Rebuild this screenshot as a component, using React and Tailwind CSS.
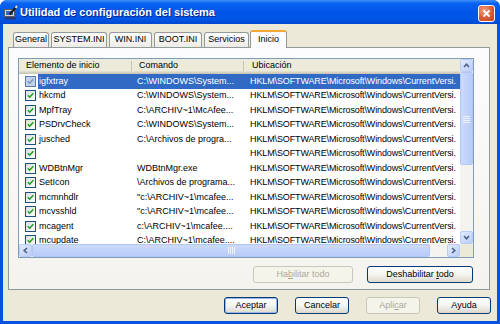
import React from "react";

const rows = [
  ["igfxtray", "C:\\WINDOWS\\System..."],
  ["hkcmd", "C:\\WINDOWS\\System..."],
  ["MpfTray", "C:\\ARCHIV~1\\McAfee..."],
  ["PSDrvCheck", "C:\\WINDOWS\\System..."],
  ["jusched", "C:\\Archivos de progra..."],
  ["", ""],
  ["WDBtnMgr", "WDBtnMgr.exe"],
  ["SetIcon", "\\Archivos de programa..."],
  ["mcmnhdlr", "\"c:\\ARCHIV~1\\mcafee..."],
  ["mcvsshld", "\"c:\\ARCHIV~1\\mcafee..."],
  ["mcagent", "c:\\ARCHIV~1\\mcafee...."],
  ["mcupdate", "C:\\ARCHIV~1\\mcafee...."],
];
const LOC = "HKLM\\SOFTWARE\\Microsoft\\Windows\\CurrentVersi.";

function Check({ sel }) {
  return (
    <span
      className={
        sel
          ? "flex h-[11px] w-[11px] items-center justify-center border border-[#5D7AB0] bg-[#C3D1EC]"
          : "flex h-[11px] w-[11px] items-center justify-center border border-[#1C5180] bg-gradient-to-br from-[#DCDCD7] to-white"
      }
    >
      <svg width="7" height="7" viewBox="0 0 7 7">
        <path
          d="M0.8 3.3 L2.7 5.2 L6.3 1.2"
          stroke={sel ? "#7896C6" : "#21A121"}
          strokeWidth="1.6"
          fill="none"
        />
      </svg>
    </span>
  );
}

function ArrowBtn({ dir }) {
  const paths = {
    up: "M2 6 L4.5 3.2 L7 6",
    down: "M2 3 L4.5 5.8 L7 3",
    left: "M6 2 L3.2 4.5 L6 7",
    right: "M3 2 L5.8 4.5 L3 7",
  };
  return (
    <div className="flex h-[13px] w-[13px] shrink-0 items-center justify-center rounded-[2px] border border-[#B7CCF7] bg-gradient-to-br from-[#E3EBFE] to-[#B9CDF8]">
      <svg width="9" height="9" viewBox="0 0 9 9">
        <path d={paths[dir]} stroke="#4D6185" strokeWidth="1.6" fill="none" />
      </svg>
    </div>
  );
}

function Btn({ children, w, disabled, def }) {
  let cls =
    "flex h-[17px] items-center justify-center rounded-[3px] border text-[9px] leading-none ";
  if (disabled) {
    cls += "border-[#C9C7BA] bg-[#F5F4EA] text-[#ACA899] ";
  } else {
    cls +=
      "border-[#003C74] bg-gradient-to-b from-white via-[#F4F4F0] to-[#DCD8CC] text-black ";
  }
  if (def) cls += "shadow-[inset_0_0_0_1px_#9DB2EF] ";
  return <div className={cls + w}>{children}</div>;
}

function Tab({ label, w, sel }) {
  if (sel) {
    return (
      <div
        className={
          "relative z-10 -mb-px -ml-px flex h-[18px] items-center justify-center rounded-t-[3px] border border-b-0 border-[#919B9C] border-t-2 border-t-[#F5A83A] bg-[#FCFCFE] pb-[1px] text-[9px] text-black " +
          w
        }
      >
        {label}
      </div>
    );
  }
  return (
    <div
      className={
        "flex h-[15px] items-center justify-center rounded-t-[3px] border border-b-0 border-[#919B9C] bg-gradient-to-b from-white to-[#ECEBE6] text-[9px] text-black " +
        w
      }
    >
      {label}
    </div>
  );
}

export default function App() {
  return (
    <div className="flex h-[324px] w-[500px] flex-col overflow-hidden rounded-t-[7px] bg-[#0653E3] font-['Liberation_Sans',Arial,sans-serif]">
      {/* Title bar */}
      <div className="flex h-[24px] shrink-0 items-center bg-[linear-gradient(to_bottom,#3D8FF7_0%,#0A62F2_14%,#0058E8_45%,#0055E5_80%,#0047D0_100%)] pl-[4px] pr-[5px]">
        <svg width="14" height="15" viewBox="0 0 14 15" className="shrink-0">
          <rect x="0.5" y="4.5" width="10" height="7" fill="#D8D8D0" stroke="#5A5A66" />
          <rect x="2" y="6" width="7" height="4" fill="#3465C8" />
          <rect x="1" y="12" width="11" height="2.5" fill="#2A3A78" />
          <path d="M13 1 L5.5 9.5" stroke="#1A1A1A" strokeWidth="2" />
          <path d="M13 1 L11.5 2.8" stroke="#E8E8E8" strokeWidth="2" />
        </svg>
        <div className="ml-[2px] flex-1 text-[11px] font-bold leading-none text-white [text-shadow:1px_1px_0_#0A1F8C]">
          Utilidad de configuración del sistema
        </div>
        <div className="mt-[3px] flex h-[17px] w-[17px] items-center justify-center rounded-[3px] border border-white bg-[radial-gradient(circle_at_35%_30%,#F2A084,#DA5A33_55%,#C1401C)]">
          <svg width="9" height="9" viewBox="0 0 9 9">
            <path d="M1.5 1.5 L7.5 7.5 M7.5 1.5 L1.5 7.5" stroke="white" strokeWidth="1.8" />
          </svg>
        </div>
      </div>

      {/* Body */}
      <div className="mx-[3px] mb-[3px] flex flex-1 flex-col bg-[#ECE9D8] pt-[6px]">
        {/* Tabs */}
        <div className="ml-[10px] flex h-[17px] items-end gap-[2px]">
          <Tab label="General" w="w-[36px]" />
          <Tab label="SYSTEM.INI" w="w-[56px]" />
          <Tab label="WIN.INI" w="w-[43px]" />
          <Tab label="BOOT.INI" w="w-[48px]" />
          <Tab label="Servicios" w="w-[45px]" />
          <Tab label="Inicio" w="w-[37px]" sel />
        </div>

        {/* Panel */}
        <div className="ml-[5px] flex h-[243px] w-[482px] flex-col border border-[#919B9C] bg-gradient-to-b from-[#FCFCFE] to-[#F4F3EE] pl-[9px] pr-[15px] pt-[10px]">
          {/* List view */}
          <div className="flex h-[200px] w-[456px] flex-col border border-[#7F9DB9] bg-white">
            <div className="flex h-[185px]">
              <div className="flex w-[441px] flex-col overflow-hidden">
                {/* header */}
                <div className="flex h-[15px] shrink-0 items-center bg-[#EBEADB] pb-[2px] text-[9px] text-black shadow-[inset_0_-1px_0_#CBC7B8,inset_0_-2px_0_#D6D2C2,inset_0_-3px_0_#E2DECD]">
                  <div className="w-[112px] pl-[7px]">Elemento de inicio</div>
                  <div className="h-[10px] w-px bg-[#C7C5B2]" />
                  <div className="w-[111px] pl-[7px]">Comando</div>
                  <div className="h-[10px] w-px bg-[#C7C5B2]" />
                  <div className="flex-1 pl-[8px]">Ubicación</div>
                </div>
                {/* rows */}
                {rows.map(([name, cmd], i) => {
                  const sel = i === 0;
                  return (
                    <div key={i} className="flex h-[14.5px] shrink-0 items-center text-[9px] leading-none">
                      <div className="flex w-[19px] shrink-0 pl-[6px]">
                        <Check sel={sel} />
                      </div>
                      <div
                        className={
                          sel
                            ? "flex h-full flex-1 items-center bg-[#316AC5] text-white"
                            : "flex h-full flex-1 items-center text-black"
                        }
                      >
                        <div className="w-[94px] shrink-0 overflow-hidden whitespace-nowrap pl-[1px]">{name}</div>
                        <div className="w-[112px] shrink-0 overflow-hidden whitespace-nowrap pl-[5px]">{cmd}</div>
                        <div className="flex-1 overflow-hidden whitespace-nowrap pl-[6px] tracking-[-0.12px]">{LOC}</div>
                      </div>
                    </div>
                  );
                })}
              </div>
              {/* vertical scrollbar */}
              <div className="flex w-[13px] flex-col bg-[#F4F3EE]">
                <ArrowBtn dir="up" />
                <div className="flex h-[93px] items-center justify-center rounded-[2px] border border-[#B1C7F5] bg-gradient-to-r from-[#CCDAFC] to-[#B8CCF8]">
                  <svg width="7" height="8" viewBox="0 0 7 8">
                    <path d="M0 1.5 H7 M0 3.5 H7 M0 5.5 H7 M0 7.5 H7" stroke="#EEF3FE" strokeWidth="1" />
                  </svg>
                </div>
                <div className="flex-1" />
                <ArrowBtn dir="down" />
              </div>
            </div>
            <div className="flex h-[13px]">
              <div className="flex w-[441px] bg-[#F4F3EE]">
                <ArrowBtn dir="left" />
                <div className="flex h-[13px] w-[398px] items-center justify-center rounded-[2px] border border-[#B1C7F5] bg-gradient-to-b from-[#CCDAFC] to-[#B8CCF8]">
                  <svg width="8" height="7" viewBox="0 0 8 7">
                    <path d="M1.5 0 V7 M3.5 0 V7 M5.5 0 V7 M7.5 0 V7" stroke="#EEF3FE" strokeWidth="1" />
                  </svg>
                </div>
                <div className="flex-1" />
                <ArrowBtn dir="right" />
              </div>
              <div className="w-[13px] bg-[#ECE9D8]" />
            </div>
          </div>

          <div className="mt-[8px] flex justify-end gap-[14px] pr-[1px]">
            <Btn w="w-[100px]" disabled>
              <span>
                Ha<span className="underline">b</span>ilitar todo
              </span>
            </Btn>
            <Btn w="w-[106px]">
              <span>
                Deshabilitar <span className="underline">t</span>odo
              </span>
            </Btn>
          </div>
        </div>

        {/* Bottom buttons */}
        <div className="mt-[7px] flex justify-end gap-[17px] pr-[6px]">
          <Btn w="w-[54px]" def>Aceptar</Btn>
          <Btn w="w-[54px]">Cancelar</Btn>
          <Btn w="w-[54px]" disabled>
            <span>
              Apli<span className="underline">c</span>ar
            </span>
          </Btn>
          <Btn w="w-[54px]">Ayuda</Btn>
        </div>
      </div>
    </div>
  );
}
